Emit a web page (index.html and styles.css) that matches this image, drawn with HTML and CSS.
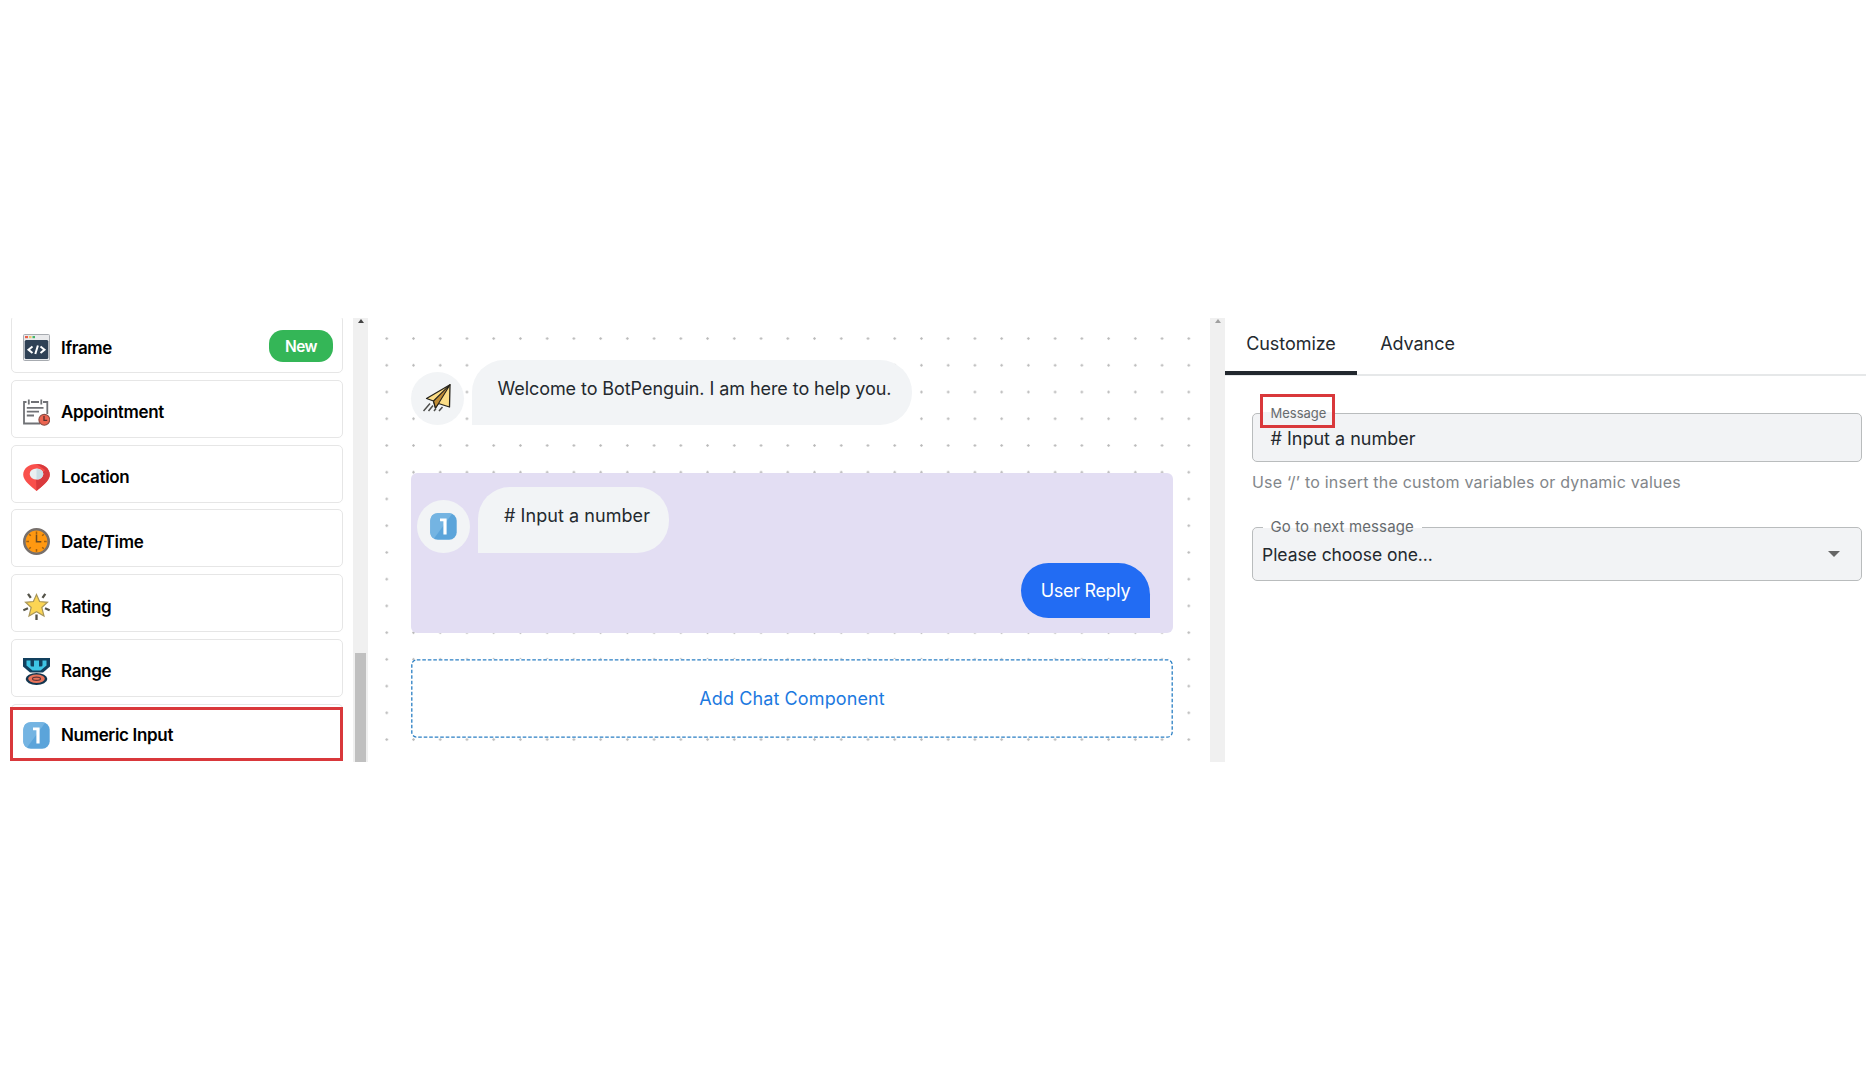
FILE: index.html
```
<!DOCTYPE html>
<html lang="en">
<head>
<meta charset="utf-8">
<title>Chat flow builder</title>
<link rel="stylesheet" href="styles.css">
</head>
<body>
<svg class="defs" width="0" height="0" aria-hidden="true">
  <symbol id="one" viewBox="0 0 27 27">
    <rect x=".3" y=".3" width="26.4" height="26.4" rx="7.5" fill="#5ba4da"/>
    <path d="M.3 19V7.800Q.3.300 7.800.300H19.200Q21 .3 22 1L4 25.500Q.3 24 .3 19Z" fill="#74b4e2"/>
    <path d="M10 5.500H16.600V21.500H13.400V8.300H10Z" fill="#fff"/>
  </symbol>
</svg>
<main class="builder">
  <aside class="sidebar">
    <div class="components">
      <div class="card">
        <svg class="icon" viewBox="0 0 27 27">
          <rect x=".5" y=".5" width="26" height="26" rx="1" fill="#e9eaec" stroke="#a7abb0"/>
          <path d="M2 2h3v2.200H2z" fill="#e8604c"/><path d="M6 2h2.500v2.200H6z" fill="#eec76a"/><path d="M9.500 2h2.500v2.200H9.500z" fill="#45b56b"/>
          <rect x="1.700" y="6" width="23.600" height="19" rx="1.500" fill="#2f4155"/>
          <path d="M9.500 12.500L5.500 15.700 9.500 19M17.500 12.500L21.500 15.700 17.500 19M14.900 11.500L12.300 20" fill="none" stroke="#fff" stroke-width="2"/>
        </svg>
        <span>Iframe</span><b class="badge">New</b>
      </div>
      <div class="card">
        <svg class="icon" viewBox="0 0 27 27">
          <path d="M3.500 3H1V24.500H17M8 3H16M20 3H24.300V15M5.800.500V5.500M18.300.500V5.500" fill="none" stroke="#707276" stroke-width="1.800"/>
          <path d="M3.800 8.800H20.500M3.800 12.700H16M3.800 16.500H11" stroke="#707276" stroke-width="1.800"/>
          <circle cx="21.300" cy="20.800" r="5.400" fill="#ec6450" stroke="#8b4b42" stroke-width="1.100"/>
          <path d="M21 17V21.300H24.200" fill="none" stroke="#59302f" stroke-width="1.300"/>
        </svg>
        <span>Appointment</span>
      </div>
      <div class="card">
        <svg class="icon" viewBox="0 0 27 27">
          <path d="M13.500 0C6 0 .2 4.500.2 10.700.2 17 8.500 22.500 13.500 27 18.500 22.500 26.800 17 26.800 10.700 26.800 4.500 21 0 13.500 0Z" fill="#f9504c"/>
          <path d="M13.500 0C21 0 26.800 4.500 26.800 10.700 26.800 17 18.500 22.500 13.500 27L13 15 22 6Z" fill="#d93a3d"/>
          <ellipse cx="13.500" cy="10" rx="6.800" ry="5.500" fill="#e9eff2"/><path d="M13.500 4.500A6.800 5.500 0 0 1 13.500 15.500Z" fill="#cbdde5"/>
        </svg>
        <span>Location</span>
      </div>
      <div class="card">
        <svg class="icon" viewBox="0 0 27 27">
          <circle cx="13.500" cy="13.500" r="12.200" fill="#ff9811" stroke="#77706c" stroke-width="2.600"/>
          <path d="M13.500 3.500V6M13.500 21V23.700M3.300 13.500H6M21 13.500H23.700M6.200 6.200L7.800 7.800M20.800 6.200L19.200 7.800M6.200 20.800L7.800 19.200M20.800 20.800L19.200 19.200" stroke="#a3600f" stroke-width="1.500"/>
          <path d="M13.500 6.500V13.700H18.300" fill="none" stroke="#6c4a20" stroke-width="1.500"/>
        </svg>
        <span>Date/Time</span>
      </div>
      <div class="card">
        <svg class="icon" viewBox="0 0 27 27">
          <path d="M5 .800L7.800 4.800M22.300.800L19.500 4.800M.3 17.300L5 15.300M26.700 17.300L22 15.300M13.500 21.500V27" stroke="#55544a" stroke-width="2.300"/>
          <path d="M13.500 1.500L16.600 8.500 24.500 9.300 18.800 14.500 21 23 13.500 18.800 6 23 8.200 14.500 2.500 9.300 10.400 8.500Z" fill="#fbd554" stroke="#a8965a" stroke-width="1.200"/>
        </svg>
        <span>Rating</span>
      </div>
      <div class="card">
        <svg class="icon" viewBox="0 0 27 27">
          <path d="M0 0H27V8.500L20 14.500H7L0 8.500Z" fill="#12405e"/>
          <path d="M3.500 2.500H7.500V7Q7.500 8.500 9 8.500H11V2.500H16V8.500H18Q19.500 8.500 19.500 7V2.500H23.500V7.500L17.500 12.500H9.500L3.500 7.500Z" fill="#3ec5e5"/>
          <ellipse cx="13.500" cy="21" rx="10.800" ry="6" fill="#12364f"/>
          <ellipse cx="13.500" cy="20.800" rx="8.300" ry="4.200" fill="#e9745a"/>
          <ellipse cx="13.500" cy="20.800" rx="4" ry="1.600" fill="#e9745a" stroke="#63353a" stroke-width="1.200"/>
        </svg>
        <span>Range</span>
      </div>
      <div class="card picked">
        <svg class="icon"><use href="#one"/></svg>
        <span>Numeric Input</span>
      </div>
    </div>
    <div class="scrollbar"><i class="up"></i><i class="thumb"></i></div>
  </aside>

  <section class="canvas">
    <div class="flow">
      <div class="row welcome">
        <div class="avatar">
          <svg class="plane" viewBox="0 0 28 28">
            <path d="M27 .700L3.500 14.500 10.500 17 12.500 24 15.500 19.500 26.500 23Z" fill="#fbdd86" stroke="#26231c" stroke-width="1.300" stroke-linejoin="round"/>
            <path d="M27 .700L10.500 17 12.500 24 15.500 19.500Z" fill="#c08c35" stroke="#26231c" stroke-width="1.100" stroke-linejoin="round"/>
            <path d="M7 19.500L.5 27M10 21.500L5.500 27M19.500 23L16 27M13 24.500L11 27" stroke="#4d4d4b" stroke-width="1.500"/>
          </svg>
        </div>
        <p class="bubble">Welcome to BotPenguin. I am here to help you.</p>
      </div>
      <div class="question">
        <div class="row">
          <div class="avatar"><svg class="icon"><use href="#one"/></svg></div>
          <p class="bubble short">#&nbsp;Input a number</p>
        </div>
        <p class="reply">User Reply</p>
      </div>
      <button class="add"><svg class="dash" width="762" height="79"><rect x=".8" y=".8" width="760.400" height="77.400" rx="5" fill="none" stroke="#2a7fc4" stroke-width="1.300" stroke-dasharray="3.600 1.900"/></svg><span>Add Chat Component</span></button>
    </div>
    <div class="scrollbar pale"><i class="up"></i></div>
  </section>

  <section class="panel">
    <nav class="tabs"><a class="tab active">Customize</a><a class="tab">Advance</a></nav>
    <div class="form">
      <div class="field message"><span class="label boxed">Message</span># Input a number</div>
      <p class="hint">Use ‘/’ to insert the custom variables or dynamic values</p>
      <div class="field select"><span class="label">Go to next message</span><span>Please choose one...</span><i class="caret"></i></div>
    </div>
  </section>
</main>
</body>
</html>
```
FILE: styles.css
```
*, *::after { box-sizing: border-box; }
body { margin: 0; height: 1080px; background: #fff; overflow: hidden; font-family: Inter, "Liberation Sans", sans-serif; font-size: 18px; color: #24292e; }
p { margin: 0; }
.defs { position: absolute; }
.builder { display: flex; height: 444px; margin-top: 318px; }

.sidebar { display: flex; width: 368px; overflow: hidden; }
.components { flex: 1; display: flex; flex-direction: column; gap: 6.800px; margin-top: -3px; padding: 0 10px 0 11px; }
.card { display: flex; align-items: center; flex: none; gap: 11px; height: 58px; padding: 7px 9px 0 11px; border: 1px solid #e6e6e6; border-radius: 5px; background: #fff; font-size: 17px; font-weight: 600; letter-spacing: -.330px; color: #000; }
.icon { display: block; flex: none; width: 27px; height: 27px; }
.badge { width: 64px; height: 32px; margin-left: auto; margin-top: -3px; border-radius: 14px; background: #34b657; color: #fff; font-size: 15.500px; font-weight: 600; line-height: 33px; text-align: center; letter-spacing: -.600px; }
.picked { position: relative; padding-top: 5px; border-bottom-color: transparent; }
.picked::after { content: ""; position: absolute; left: -2px; right: -1px; top: 2px; height: 54px; border: 3px solid #d9383b; }

.scrollbar { display: flex; flex-direction: column; align-items: center; flex: none; width: 15px; background: #f0f0f0; }
.up { margin-top: 1px; border: 3.500px solid transparent; border-top: 0; border-bottom: 4px solid #444; }
.pale .up { border-bottom-color: #a0a0a0; }
.thumb { width: 11px; height: 109px; margin-top: auto; background: #c0c0c0; }

.canvas { display: flex; width: 857px; background: radial-gradient(circle at 50% 50%, #b9b9b9 0, #b9b9b9 .900px, transparent 1.500px) 5.400px 7.200px / 26.740px 26.740px; }
.flow { flex: 1; padding: 42px 37px 0 43px; }
.row { display: flex; align-items: flex-end; gap: 8px; }
.welcome { gap: 7.500px; }
.avatar { display: flex; align-items: center; justify-content: center; width: 53px; height: 53px; border-radius: 50%; background: #f2f4f6; }
.plane { width: 28px; height: 28px; margin-right: 1px; }
.bubble { height: 64.500px; padding-left: 26px; width: 440.500px; border-radius: 32px 32px 32px 0; background: #f2f4f6; line-height: 57px; letter-spacing: -.070px; white-space: nowrap; }
.short { width: 191px; height: 66px; line-height: 58px; letter-spacing: .060px; }
.question { display: flex; flex-direction: column; height: 160px; margin-top: 48px; padding: 14px 23px 15px 6px; border-radius: 6px; background: #e3def3; }
.reply { align-self: flex-end; width: 129px; height: 55px; margin-top: auto; border-radius: 28px 32px 0 28px; background: #226cf3; color: #fff; line-height: 55px; text-align: center; letter-spacing: -.300px; }
.add { display: flex; align-items: center; justify-content: center; position: relative; width: 762px; height: 79px; margin-top: 26.500px; padding: 0; border: 0; border-radius: 6px; background: #fff; color: #1c79e0; font: 18px Inter, sans-serif; letter-spacing: .110px; }
.dash { position: absolute; left: 0; top: 0; }

.panel { flex: 1; }
.tabs { display: flex; height: 58px; border-bottom: 2px solid #e6e8e9; }
.tab { width: 121px; height: 57px; line-height: 52px; text-align: center; letter-spacing: -.050px; }
.active { width: 132px; border-bottom: 4px solid #22282e; }
.form { padding: 37px 4px 0 27px; }
.field { position: relative; display: flex; align-items: center; border: 1px solid #b9bcbd; border-radius: 5px; background: #f2f3f5; }
.message { height: 49px; padding: 1px 18px 0 17.500px; }
.select { height: 54px; margin-top: 28.500px; padding: 1px 21px 0 9px; font-size: 17.500px; letter-spacing: -.050px; }
.hint { height: 36px; line-height: 40px; font-size: 16px; letter-spacing: .210px; color: #82868a; }
.label { position: absolute; left: 10px; top: -11px; height: 20px; padding: 0 8px 0 7.500px; background: linear-gradient(#fff 55%, #f2f3f5 55%); color: #676b6e; font-size: 15px; line-height: 20px; letter-spacing: .110px; white-space: nowrap; }
.boxed { left: 7px; top: -20px; width: 74.500px; height: 34px; padding: 3px 0 0 7.500px; border: 3px solid #d9383b; background: linear-gradient(#fff 55%, #f2f3f5 55%); font-size: 13px; line-height: 27px; letter-spacing: 0; }
.caret { margin-left: auto; border: 6.500px solid transparent; border-bottom: 0; border-top: 6.500px solid #666; }
```
